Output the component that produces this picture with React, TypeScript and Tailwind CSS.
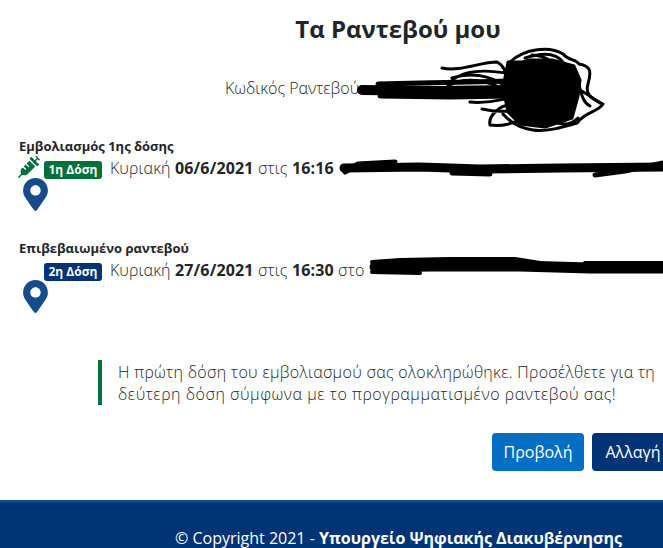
import { FaMapMarkerAlt, FaSyringe } from "react-icons/fa"

function Appointment({
  title,
  badge,
  badgeClass,
  date,
  time,
  suffix,
  syringe,
}: {
  title: string
  badge: string
  badgeClass: string
  date: string
  time: string
  suffix?: string
  syringe?: boolean
}) {
  return (
    <section className="pl-[19px]">
      <h3 className="mb-[7px] text-[13px] font-bold leading-[15px] text-[#212529]">{title}</h3>
      <div className="flex h-[18px] items-center">
        <div className="flex w-[25px] shrink-0 justify-start">
          {syringe && <FaSyringe className="-ml-[1px] -mt-[7px] h-[22px] w-[22px] text-[#00703c]" />}
        </div>
        <span className={`rounded-[3px] px-[4.5px] text-[12px] font-bold leading-[18px] text-white ${badgeClass}`}>
          {badge}
        </span>
        <p className="-mt-[4px] ml-[8px] whitespace-nowrap text-[16px] font-light tracking-[0.15px] text-[#212529]">
          Κυριακή <b className="font-bold">{date}</b> στις <b className="font-bold">{time}</b>
          {suffix}
        </p>
      </div>
      <FaMapMarkerAlt className="-mt-[1px] ml-[4px] h-[33px] w-[25px] text-[#154c89]" />
    </section>
  )
}

export default function App() {
  return (
    <div className="relative flex h-[548px] w-[663px] flex-col overflow-hidden bg-white font-['Open_Sans',sans-serif] text-[#212529]">
      <main className="flex-1">
        <h1 className="ml-[133px] pt-[13px] text-center text-[24px] font-bold leading-[32px]">Τα Ραντεβού μου</h1>
        <p className="mt-[31px] pl-[225px] text-[16px] font-light leading-[24px]">Κωδικός Ραντεβού</p>

        <div className="mt-[39px] flex flex-col gap-[30px]">
          <Appointment
            title="Εμβολιασμός 1ης δόσης"
            badge="1η Δόση"
            badgeClass="bg-[#00703c]"
            date="06/6/2021"
            time="16:16"
            syringe
          />
          <Appointment
            title="Επιβεβαιωμένο ραντεβού"
            badge="2η Δόση"
            badgeClass="bg-[#003476]"
            date="27/6/2021"
            time="16:30"
            suffix=" στο"
          />
        </div>

        <div className="ml-[98px] mt-[47px] whitespace-nowrap border-l-[4px] border-[#00703c] pl-[16px] pt-[1px] text-[16px] font-light leading-[22px] tracking-[0.31px]">
          Η πρώτη δόση του εμβολιασμού σας ολοκληρώθηκε. Προσέλθετε για τη
          <br />
          <span className="tracking-[0.54px]">δεύτερη δόση σύμφωνα με το προγραμματισμένο ραντεβού σας!</span>
        </div>

        <div className="ml-[492px] mt-[28px] flex gap-[8px]">
          <button className="h-[38px] w-[92px] shrink-0 rounded-[4px] bg-[#046ec5] text-[16px] text-white">Προβολή</button>
          <button className="h-[38px] w-[82px] shrink-0 rounded-[4px] bg-[#003476] text-[16px] text-white">Αλλαγή</button>
        </div>
      </main>

      <footer className="h-[48px] whitespace-nowrap border-t-[3px] border-[#0e4a8a] bg-[#003476] pl-[175px] pt-[23px] text-[16px] leading-[24px] text-white">
        © Copyright 2021 - <b className="font-bold">Υπουργείο Ψηφιακής Διακυβέρνησης</b>
      </footer>

      {/* redaction scribbles drawn over the text */}
      <svg className="absolute left-0 top-0 h-[548px] w-[663px]" viewBox="0 0 663 548" fill="none" stroke="#000" strokeLinecap="round" strokeLinejoin="round">
        <path strokeWidth="10" d="M362 90 L440 91 L515 90" />
        <path strokeWidth="5" d="M378 84 L420 83 L470 82 L510 81 M380 96 L450 97 L510 96" />
        <path strokeWidth="3" d="M442 68 C460 72 480 62 497 62 C505 66 506 74 508 82 M450 82 C465 68 490 70 510 74 M452 78 C470 72 490 75 505 86 M448 86 C465 76 490 80 508 92 M482 109 C495 112 510 112 520 108 M490 125 C488 116 500 105 510 105 M490 125 C505 127 515 122 525 118 M470 102 C485 104 500 100 510 98" />
        <path strokeWidth="3" d="M510 62 C525 48 550 46 563 54 C570 62 575 58 579 64 C590 66 592 70 588 84 C585 94 590 98 603 104 C598 112 585 112 577 123 C560 128 545 132 533 130 C520 128 510 122 503 114" />
        <path strokeWidth="3" d="M525 58 C545 52 560 52 566 68 M532 55 C545 56 552 60 556 70 M572 70 C582 80 578 100 590 106 M580 90 C590 96 596 100 600 103 M555 122 C565 126 572 124 578 118" />
        <path fill="#000" strokeWidth="3" d="M508 62 L522 62 L530 60 L552 60 L574 66 L580 80 L578 96 L572 118 L545 127 L520 124 L508 112 L503 88 Z" />
        <path strokeWidth="9" d="M344 168 L420 167 L480 169 L560 168 L663 167" />
        <path strokeWidth="5" d="M345 172 L358 164 L395 162 M452 173 L490 174 M595 175 L625 171 L663 163" />
        <path strokeWidth="11" d="M375 267 L430 266 L520 266 L590 268 L663 268" />
        <path strokeWidth="4" d="M372 262 L400 260 L450 259 L515 259 L540 263 M585 263 L663 263 M372 272 L420 273" />
      </svg>
    </div>
  )
}
